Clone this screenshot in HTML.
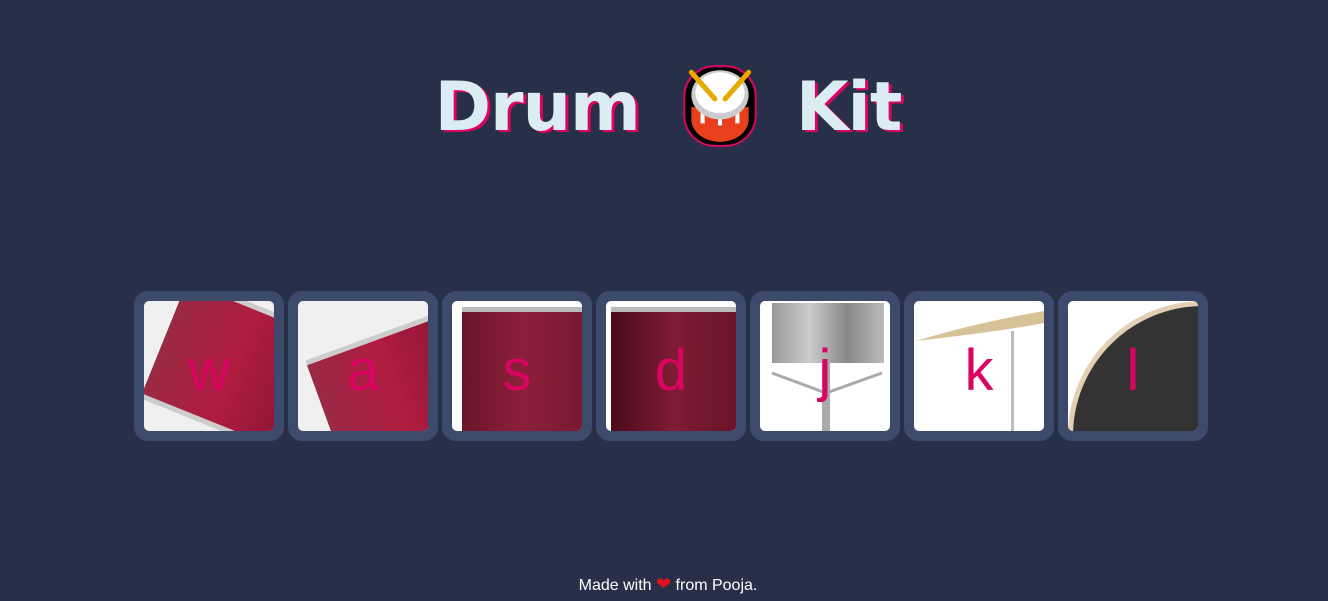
<!DOCTYPE html>
<html><head><meta charset="utf-8"><style>
html,body{margin:0;padding:0;}
body{width:1328px;height:601px;background:#283049;position:relative;overflow:hidden;font-family:"Liberation Sans",sans-serif;}
h1{position:absolute;left:0;width:1328px;top:58px;margin:0;text-align:center;font-family:"DejaVu Sans","Liberation Sans",sans-serif;font-weight:bold;font-size:68px;letter-spacing:-1px;color:#dbedf3;text-shadow:3px 2px 0 #da0463;padding-left:8px;box-sizing:border-box;}
.emo{display:inline-block;width:80px;height:92px;vertical-align:-20px;margin:0 36px 0 40px;}
.btn{position:absolute;top:291px;width:130px;height:130px;border:10px solid #3d4a6b;border-radius:14px;background:#3d4a6b;}
.in{position:absolute;left:0;top:0;width:130px;height:130px;border-radius:5px;overflow:hidden;background:#f0f0f0;}
.l{position:absolute;left:0;top:38px;width:130px;text-align:center;font-size:58px;color:#da0463;line-height:64px;}
.foot{position:absolute;top:575px;left:0;width:1328px;text-align:center;color:#fff;font-size:16px;line-height:20px;height:20px;padding-left:8px;box-sizing:border-box;}
</style></head><body>
<h1>Drum<svg class="emo" viewBox="0 0 76 90"><rect x="3" y="8" width="70" height="78" rx="30" fill="#000" stroke="#da0463" stroke-width="2"/><path d="M10 48 h56 v12 a28 22 0 0 1 -56 0z" fill="#e8401c"/><rect x="19" y="52" width="4" height="12" fill="#fff"/><rect x="36" y="54" width="4" height="12" fill="#fff"/><rect x="53" y="52" width="4" height="12" fill="#fff"/><ellipse cx="38" cy="36" rx="28" ry="24" fill="#ccc"/><ellipse cx="38" cy="34" rx="24" ry="20" fill="#fff"/><path d="M10 14 L33 40 M66 14 L43 40" stroke="#e9a800" stroke-width="5" stroke-linecap="round"/></svg>Kit</h1>

<div class="btn" style="left:134px"><div class="in"><div style="position:absolute;left:15px;top:0;width:150px;height:120px;background:linear-gradient(90deg,#9a2a44,#b01c40,#8a1532);transform:rotate(22deg);border-top:5px solid #ccc;border-bottom:5px solid #ccc;"></div><div class="l">w</div></div></div>
<div class="btn" style="left:288px"><div class="in"><div style="position:absolute;left:25px;top:30px;width:150px;height:120px;background:linear-gradient(90deg,#9a2a44,#b01c40,#8a1532);transform:rotate(-20deg);border-top:5px solid #ccc;border-bottom:5px solid #ccc;"></div><div class="l">a</div></div></div>
<div class="btn" style="left:442px"><div class="in" style="background:#fff"><div style="position:absolute;left:10px;top:6px;width:120px;height:124px;background:linear-gradient(90deg,#6a1428,#8c1f3a,#7a1830);border-top:5px solid #bbb;"></div><div class="l">s</div></div></div>
<div class="btn" style="left:596px"><div class="in" style="background:#fff"><div style="position:absolute;left:5px;top:6px;width:125px;height:124px;background:linear-gradient(90deg,#4a0a1a,#7e1c34,#6a1428);border-top:5px solid #bbb;"></div><div class="l">d</div></div></div>
<div class="btn" style="left:750px"><div class="in" style="background:#fff"><div style="position:absolute;left:12px;top:2px;width:112px;height:60px;background:linear-gradient(90deg,#999,#ccc,#888,#bbb);"></div><div style="position:absolute;left:62px;top:62px;width:8px;height:68px;background:#aaa"></div><svg style="position:absolute;left:0;top:0" width="130" height="130"><path d="M12 72 L66 92 L122 72" stroke="#aaa" stroke-width="3" fill="none"/></svg><div class="l">j</div></div></div>
<div class="btn" style="left:904px"><div class="in" style="background:#fff"><svg style="position:absolute;left:0;top:0" width="130" height="130"><path d="M2 40 Q60 22 130 10 L130 22 Q90 30 2 40z" fill="#d6c498"/><rect x="97" y="30" width="3" height="100" fill="#bbb"/></svg><div class="l">k</div></div></div>
<div class="btn" style="left:1058px"><div class="in" style="background:#fff"><div style="position:absolute;left:0;top:0;width:260px;height:260px;border-radius:50%;background:#333;border:5px solid #e2cfb4;"></div><div class="l">l</div></div></div>

<div class="foot">Made with <span style="color:#e0121b;font-size:18px;line-height:18px">❤</span> from Pooja.</div>
</body></html>
